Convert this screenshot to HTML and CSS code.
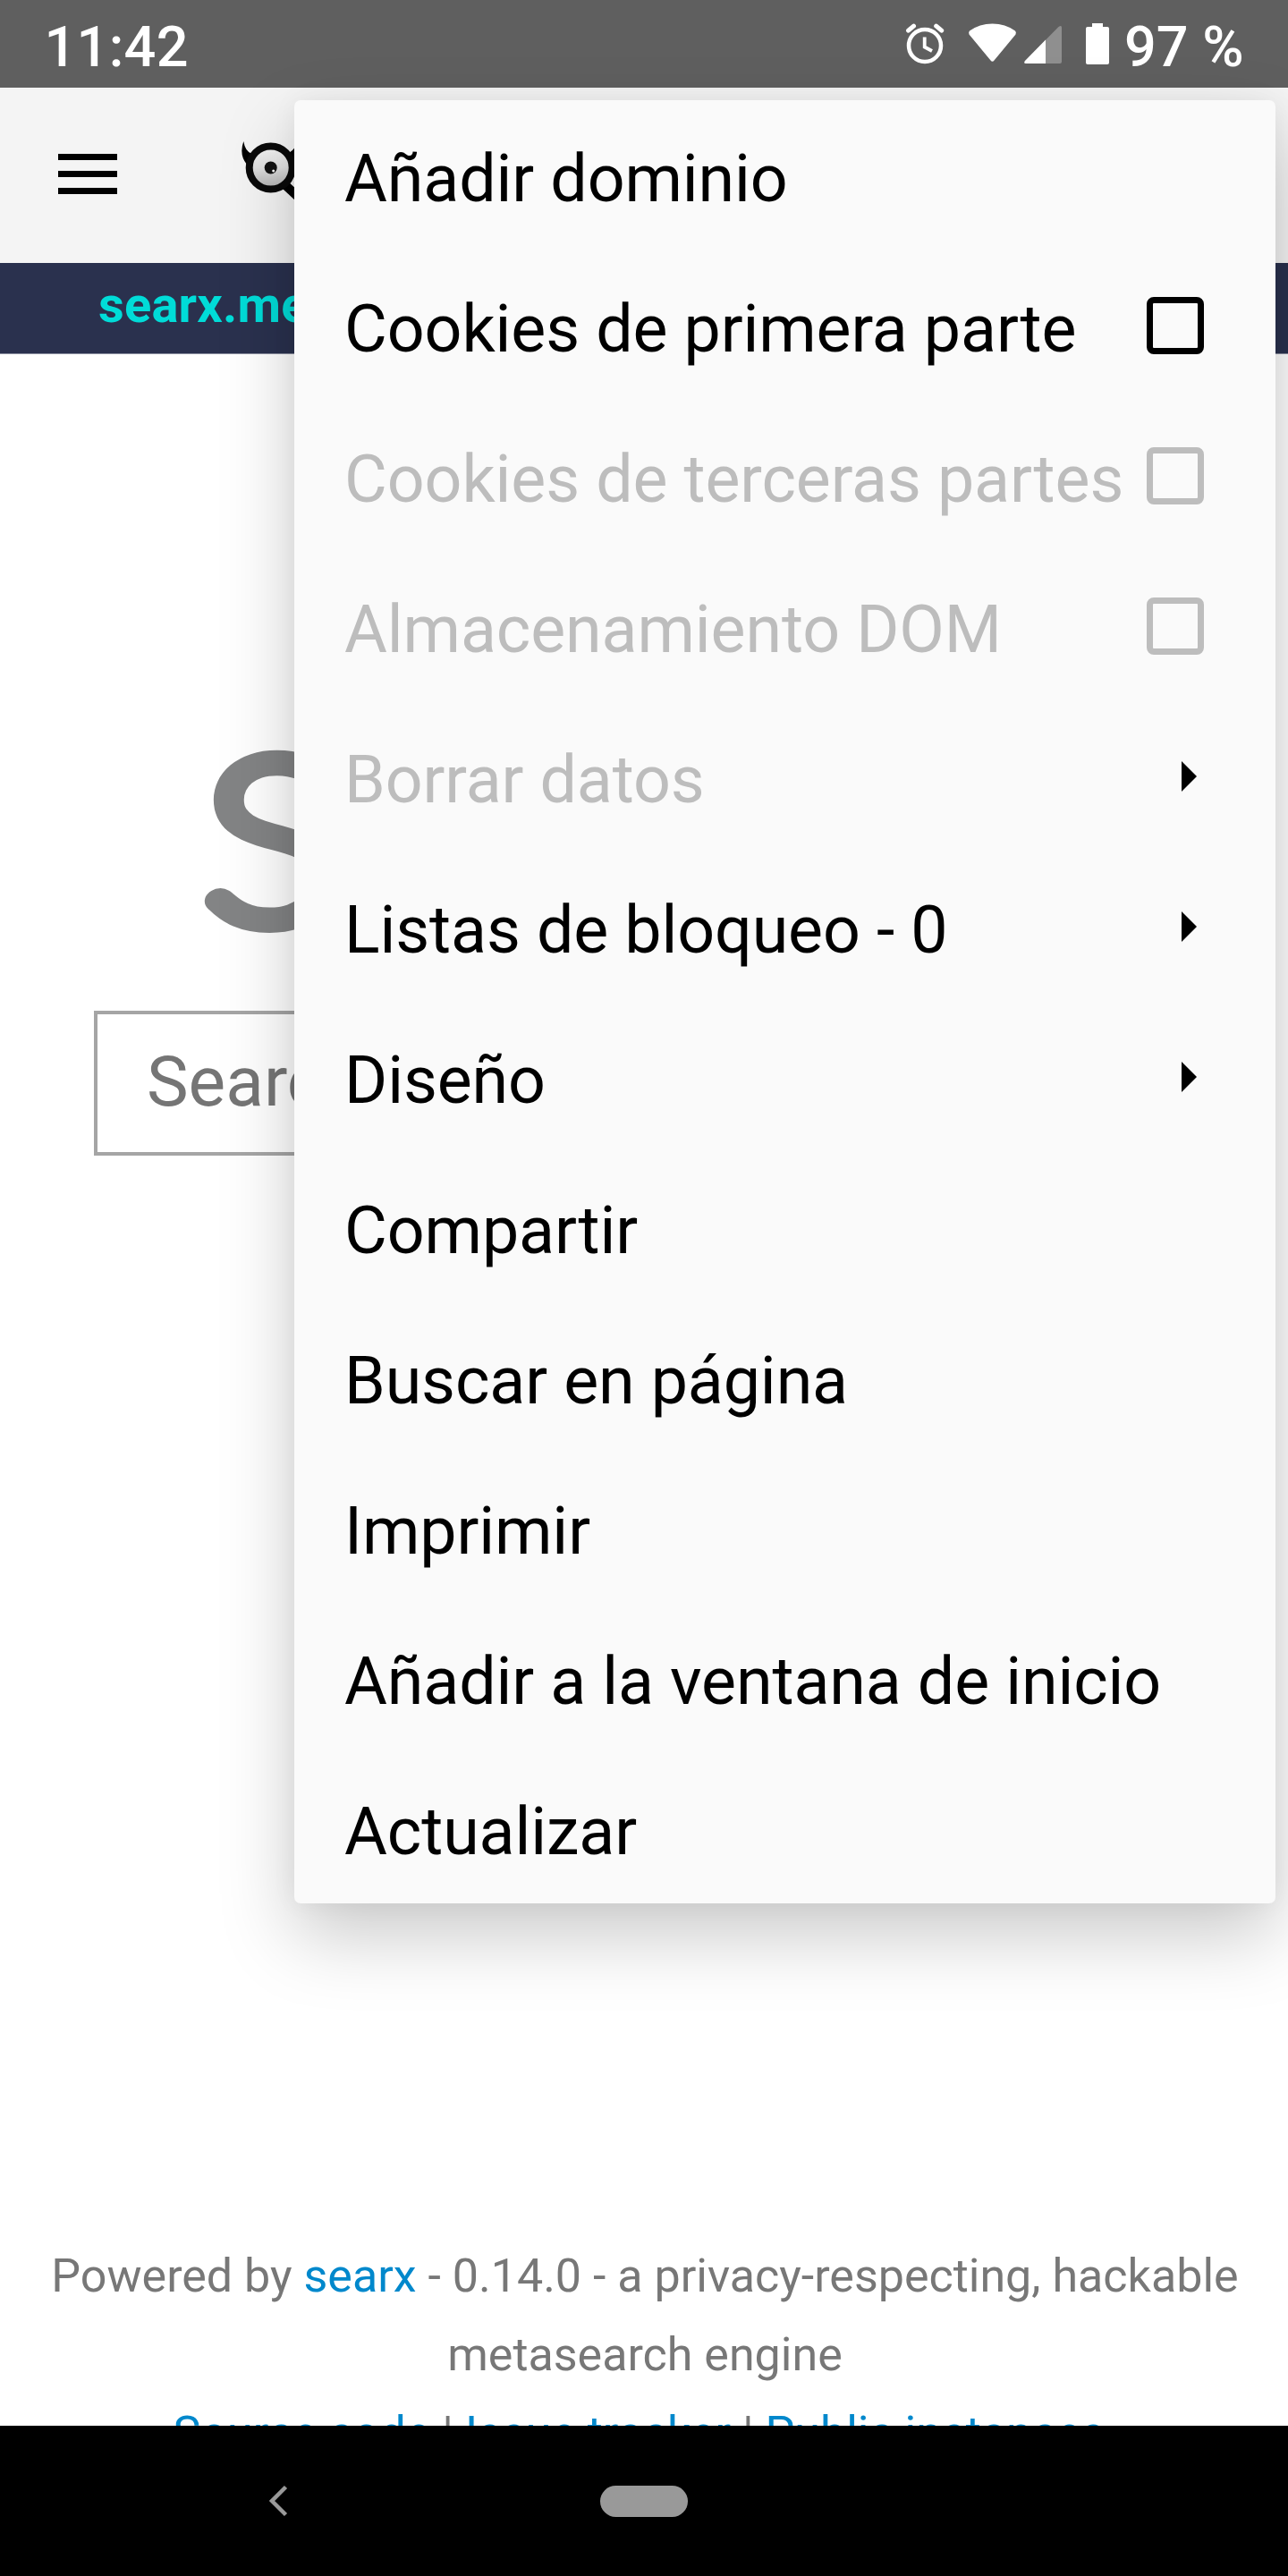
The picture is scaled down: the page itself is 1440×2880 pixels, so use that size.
FILE: index.html
```html
<!DOCTYPE html>
<html lang="es">
<head>
<meta charset="utf-8">
<title>searx.me</title>
<link rel="stylesheet" href="styles.css">
</head>
<body>
<div class="screen">
  <header class="status">
    <span class="clock">11:42</span>
    <svg class="status-icons" width="300" height="98" viewBox="1000 0 300 98">
      <g fill="none" stroke="#fff" stroke-linecap="round">
        <circle cx="1034" cy="51" r="18" stroke-width="4.5"/>
        <path d="M1033.7 41.5V52.500L1042 57" stroke-width="3.8" stroke-linecap="butt"/>
        <path d="M1015.5 34.2L1021.5 29.2M1052.7 34.2L1046.7 29.2" stroke-width="5"/>
      </g>
      <path d="M1083.5 38.5Q1082.500 36 1084 34.500Q1095 26.500 1109.500 26.500T1135 34.500Q1136.500 36 1135.500 38.500L1111.500 67.500Q1109.500 70 1107.500 67.500Z" fill="#fff"/>
      <path d="M1147 71Q1144 71 1146 68L1183.5 30Q1187 27.500 1187 31V69Q1187 71 1185 71Z" fill="#8f8f8f"/>
      <path d="M1147 71Q1144 71 1146 68L1169 44.5V71Z" fill="#fff"/>
      <path d="M1221 26h12v4h5q2 0 2 2v38q0 2-2 2h-22q-2 0-2-2v-38q0-2 2-2h5z" fill="#fff"/>
    </svg>
    <span class="battery">97 %</span>
  </header>
  <div class="toolbar">
    <svg class="burger" width="66" height="45" viewBox="0 0 66 45"><path d="M0 0h66v7H0zM0 19h66v7H0zM0 38h66v7H0z"/></svg>
    <svg class="mascot" width="70" height="70" viewBox="265 153 70 70">
      <defs><linearGradient id="eye" x1="0" y1="0" x2="0" y2="1"><stop offset="0" stop-color="#f4f4f4"/><stop offset=".5" stop-color="#e0e0e0"/><stop offset="1" stop-color="#b0b0b0"/></linearGradient></defs>
      <path d="M272.3 158Q274 169 281.5 172L276 184Q267 173 272.3 158ZM333 158Q331 166 323 171L330 182Q337 172 333 158Z"/>
      <path d="M318 206L333 220" stroke="#000" stroke-width="10"/>
      <circle cx="302.7" cy="187.5" r="24" fill="url(#eye)" stroke="#0a0a0a" stroke-width="8"/>
      <circle cx="302.7" cy="187.5" r="7" fill="#111"/><circle cx="305.7" cy="191" r="1.5" fill="#fff"/>
    </svg>
  </div>
  <div class="domain">searx.me</div>
  <main class="page">
    <svg class="wordmark" width="300" height="240" viewBox="215 820 300 240"><text class="wordmark-letter" transform="translate(228 1028) scale(1.18 1)">S</text></svg>
    <div class="search">Search for...</div>
    <footer class="credits">
      <p>Powered by <a>searx</a> - 0.14.0 - a privacy-respecting, hackable metasearch engine</p>
      <p class="links"><a>Source code</a> | <a>Issue tracker</a> | <a>Public instances</a></p>
    </footer>
  </main>
  <nav class="navbar">
    <svg class="back" width="22" height="36" viewBox="0 0 22 36"><path d="M19.5 2.5L4 18L19.5 33.5" fill="none" stroke="#999" stroke-width="4.5"/></svg>
    <span class="home"></span>
  </nav>
  <ul class="menu">
    <li><span>Añadir dominio</span></li>
    <li><span>Cookies de primera parte</span><i class="check"></i></li>
    <li class="off"><span>Cookies de terceras partes</span><i class="check"></i></li>
    <li class="off"><span>Almacenamiento DOM</span><i class="check"></i></li>
    <li class="off"><span>Borrar datos</span><i class="arrow"></i></li>
    <li><span>Listas de bloqueo - 0</span><i class="arrow"></i></li>
    <li><span>Diseño</span><i class="arrow"></i></li>
    <li><span>Compartir</span></li>
    <li><span>Buscar en página</span></li>
    <li><span>Imprimir</span></li>
    <li><span>Añadir a la ventana de inicio</span></li>
    <li><span>Actualizar</span></li>
  </ul>
</div>
</body>
</html>
```
FILE: styles.css
```css
* { box-sizing: border-box; }
body { margin: 0; background: #fff; font-family: Roboto, "Noto Sans", sans-serif; }
.screen { position: relative; width: 1440px; height: 2880px; overflow: hidden; display: flex; flex-direction: column; }
.status { height: 98px; background: #5f5f5f; color: #fff; display: flex; align-items: center; padding: 7px 0 0 49.5px; font-size: 63px; font-weight: 500; }
.clock { flex: 0 0 950.5px; letter-spacing: .3px; }
.status-icons { flex: none; margin: -7px -43px 0 0; }
.toolbar { height: 196px; background: #f4f4f4; display: flex; align-items: flex-start; padding-left: 65px; }
.burger { flex: none; margin-top: 74px; }
.mascot { flex: none; margin: 55px 0 0 134px; }
.domain { height: 102px; background: #2a314e; border-bottom: 1px solid #8b8fa0; color: #00dcd8; font-size: 56px; font-weight: 700; letter-spacing: .2px; line-height: 95px; padding-left: 110px; }
.page { flex: 1; min-height: 0; overflow: hidden; display: flex; flex-direction: column; }
.wordmark { flex: none; margin: 424px 0 0 215px; }
.wordmark-letter { font-family: Lato, sans-serif; font-weight: 100; font-size: 249px; fill: #838485; stroke: #838485; stroke-width: 26px; stroke-linejoin: round; }
.search { flex: none; width: 1230px; height: 162px; margin: 70px 0 0 105px; border: 4px solid #a5a5a5; padding-left: 55px; font-size: 78.5px; line-height: 150px; color: #757575; }
.credits { margin-top: 1209px; padding: 0 39px 0 41px; text-align: center; font-size: 52px; line-height: 88px; color: #777; }
.credits p { margin: 0; }
.credits .links { padding-right: 13px; }
.credits a { color: #08c; }
.navbar { flex: none; height: 168px; background: #000; display: flex; align-items: center; }
.back { margin-left: 300px; }
.home { width: 98px; height: 35px; margin-left: 349px; border-radius: 18px; background: #999; }
.menu { position: absolute; left: 329px; top: 112px; width: 1097px; margin: 0; padding: 0; list-style: none; background: #fafafa; border-radius: 7px; box-shadow: 0 36px 84px rgba(0,0,0,.21), 0 0 28px rgba(0,0,0,.05); }
.menu li { height: 168px; padding: 0 80px 0 56px; display: flex; align-items: center; justify-content: space-between; font-size: 73.5px; letter-spacing: -.1px; white-space: nowrap; color: #000; }
.menu span { padding-top: 8px; }
.menu .off { color: #bdbdbd; }
.check { width: 64px; height: 64px; border: 7px solid currentColor; border-radius: 8px; }
.arrow { margin-right: 8px; border-left: 17px solid #000; border-top: 17px solid transparent; border-bottom: 17px solid transparent; }
```
